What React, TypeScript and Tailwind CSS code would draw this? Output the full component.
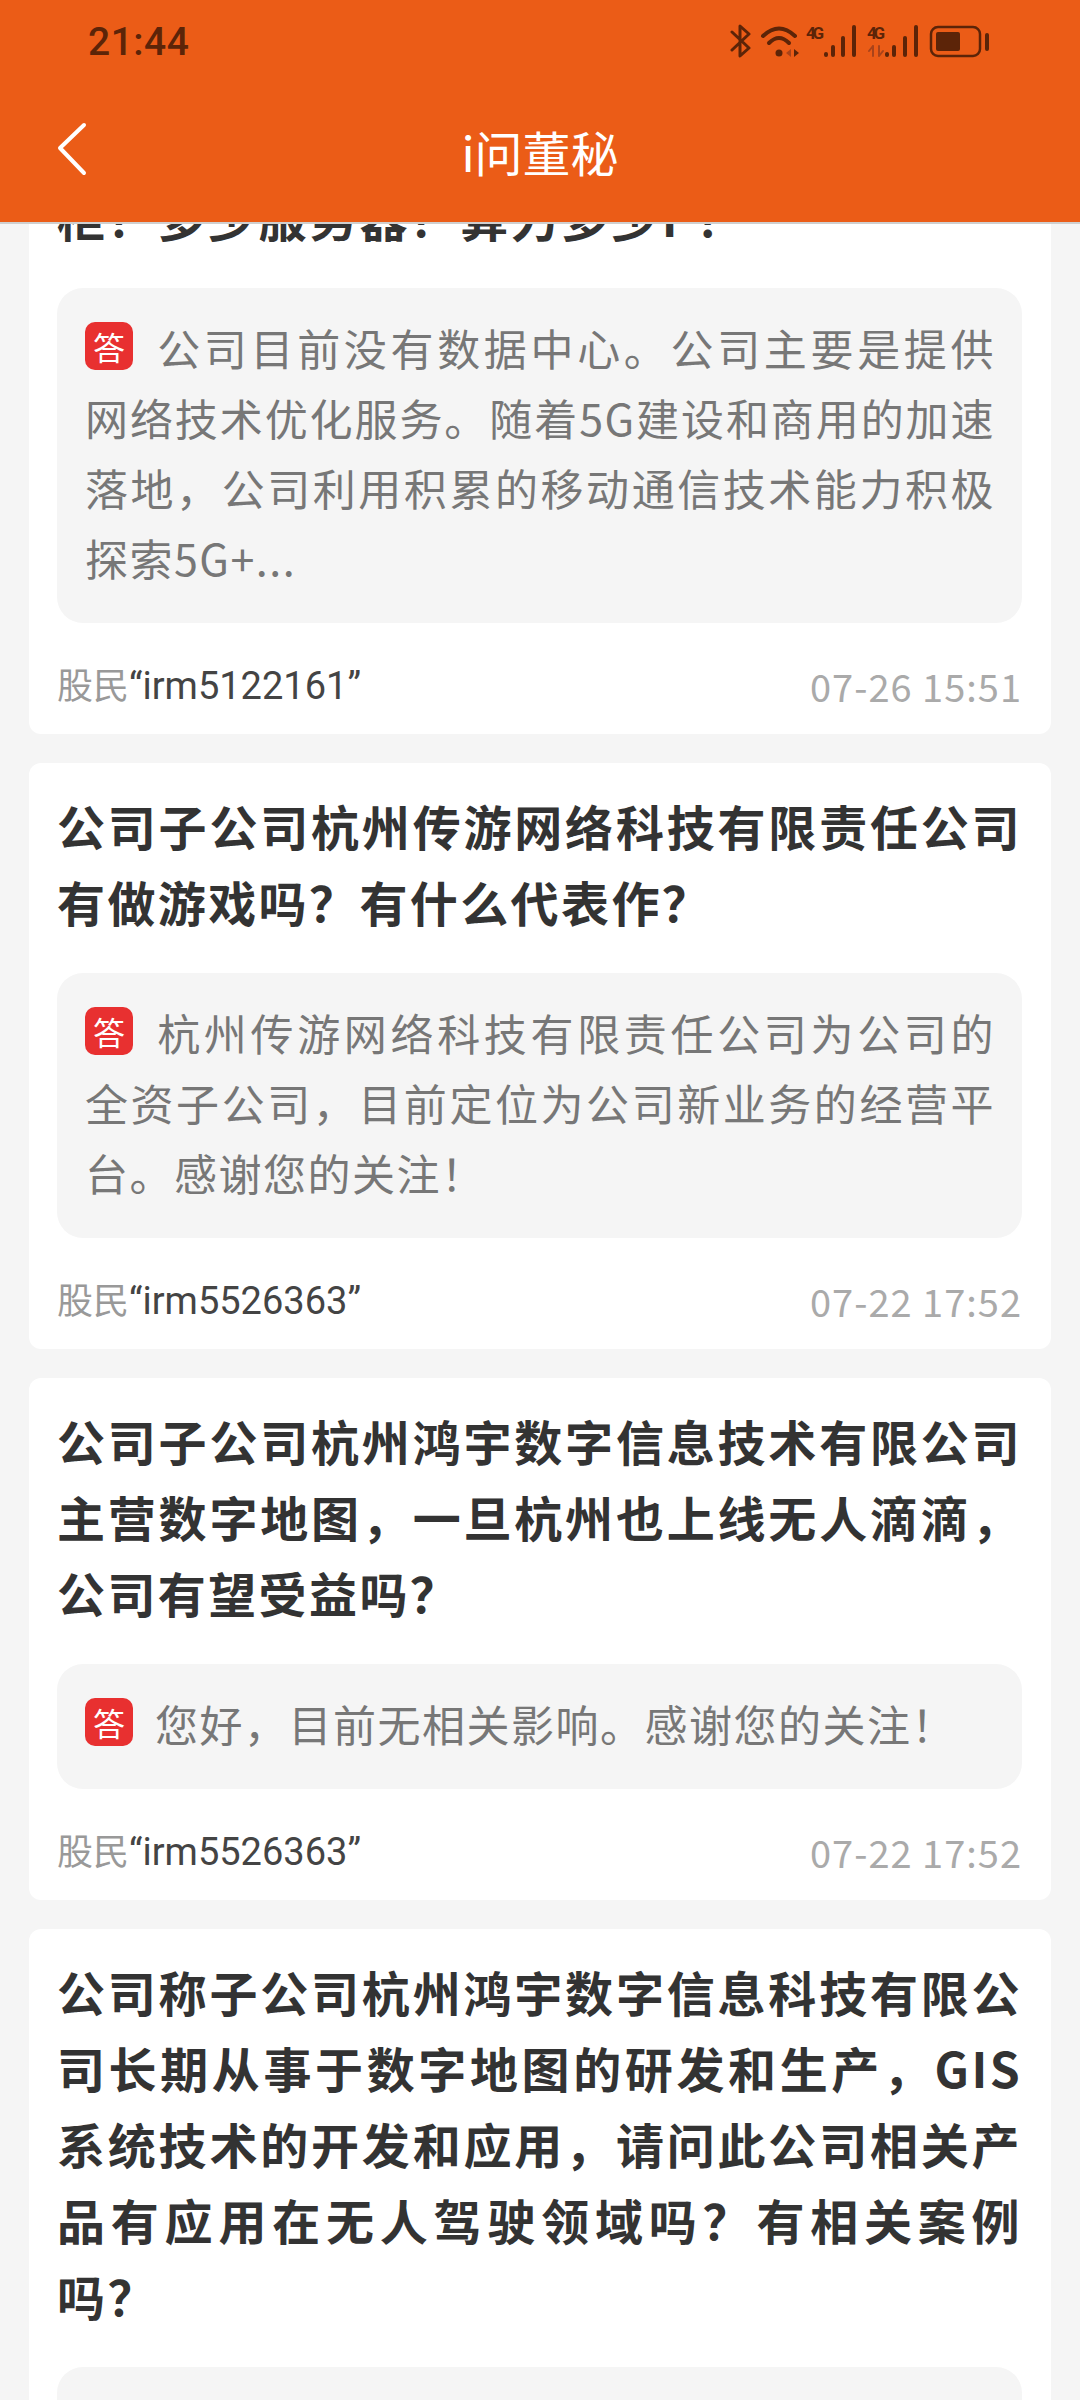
type Question = {
  title: string;
  answer?: string;
  user?: string;
  time?: string;
};

const questions: Question[] = [
  {
    title: '请问公司目前共拥有多少数据中心？多少机柜？多少服务器？算力多少P？',
    answer:
      '公司目前没有数据中心。公司主要是提供网络技术优化服务。随着5G建设和商用的加速落地，公司利用积累的移动通信技术能力积极探索5G+...',
    user: 'irm5122161',
    time: '07-26 15:51',
  },
  {
    title: '公司子公司杭州传游网络科技有限责任公司有做游戏吗？有什么代表作？',
    answer: '杭州传游网络科技有限责任公司为公司的全资子公司，目前定位为公司新业务的经营平台。感谢您的关注！',
    user: 'irm5526363',
    time: '07-22 17:52',
  },
  {
    title: '公司子公司杭州鸿宇数字信息技术有限公司主营数字地图，一旦杭州也上线无人滴滴，公司有望受益吗？',
    answer: '您好，目前无相关影响。感谢您的关注！',
    user: 'irm5526363',
    time: '07-22 17:52',
  },
  {
    title:
      '公司称子公司杭州鸿宇数字信息科技有限公司长期从事于数字地图的研发和生产，GIS系统技术的开发和应用，请问此公司相关产品有应用在无人驾驶领域吗？有相关案例吗？',
    answer: ' ',
  },
];

function StatusIcons() {
  return (
    <svg width="260" height="36" viewBox="730 22 260 36" fill="none" stroke="#5c2408" strokeLinecap="round" strokeLinejoin="round">
      {/* bluetooth */}
      <path d="M732 30 L749 46 L740 54 L740 24 L749 32 L732 48" strokeWidth="3" />
      {/* wifi */}
      <path d="M763 34 Q779 19 795 34" strokeWidth="4" />
      <path d="M769 41 Q779 31 789 41" strokeWidth="4" />
      <circle cx="779" cy="51" r="3.5" fill="#5c2408" stroke="none" />
      <path d="M791 47 L786 51 L791 55 Z" fill="#a8431a" stroke="none" />
      <path d="M794 47 L799 51 L794 55 Z" fill="#5c2408" stroke="none" />
      {/* first signal */}
      <text x="806" y="37" fontSize="17" fontWeight="700" fontFamily="Roboto, sans-serif" textLength="18" fill="#5c2408" stroke="none">4G</text>
      <g strokeWidth="4">
        <path d="M826 52 L826 53" />
        <path d="M833 45 L833 53" />
        <path d="M843 36 L843 53" />
        <path d="M854 25 L854 53" />
      </g>
      {/* second signal */}
      <text x="867" y="37" fontSize="17" fontWeight="700" fontFamily="Roboto, sans-serif" textLength="18" fill="#5c2408" stroke="none">4G</text>
      <path d="M873 44 L869 49 M873 44 L873 54" strokeWidth="2" stroke="#a8431a" />
      <path d="M879 44 L879 54 M879 54 L883 49" strokeWidth="2" stroke="#a8431a" />
      <g strokeWidth="4">
        <path d="M887 52 L887 53" />
        <path d="M894 45 L894 53" />
        <path d="M905 36 L905 53" />
        <path d="M916 25 L916 53" />
      </g>
      {/* battery */}
      <rect x="931" y="25" width="49" height="29" rx="7" strokeWidth="2.5" />
      <rect x="936" y="30" width="24" height="19" rx="2" fill="#5c2408" stroke="none" />
      <path d="M987 33 L987 47" strokeWidth="4" />
    </svg>
  );
}

function AnswerBadge() {
  return (
    <span className="inline-flex w-[48px] h-[48px] mr-[22px] align-[6px] items-center justify-center rounded-[10px] bg-[#e83030] text-white text-[32px] leading-none tracking-normal">
      答
    </span>
  );
}

function QuestionCard({ item }: { item: Question }) {
  return (
    <div className="bg-white rounded-[12px] pl-[28px] pr-[29px] pt-[24px] pb-[19px]">
      <h2 className="text-[48px] leading-[76px] font-bold text-[#333333] tracking-[2.4px] text-justify m-0">{item.title}</h2>
      <div className="mt-[34px] bg-[#f5f5f5] rounded-[26px] pl-[28px] pr-[27px] pt-[24px] pb-[31px] text-[43px] leading-[70px] tracking-[1.5px] text-justify text-[#777777]">
        <AnswerBadge />
        {item.answer}
      </div>
      {item.user && (
        <div className="mt-[32px] flex items-center justify-between h-[60px] text-[36px]">
          <span className="text-[#999999]">
            股民<span className="font-['Roboto',sans-serif] text-[38px] text-[#444444]">“{item.user}”</span>
          </span>
          <span className="text-[38px] text-[#aaaaaa] tracking-[1px]">{item.time}</span>
        </div>
      )}
    </div>
  );
}

export default function App() {
  return (
    <div className="w-[1080px] h-[2400px] overflow-hidden bg-[#f5f5f5] font-['Noto_Sans_CJK_SC','Noto_Sans',sans-serif]">
      <header className="relative z-10 h-[224px] bg-[#eb5c17] border-b-2 border-[#cfcfcf]">
        <div className="flex items-center justify-between h-[84px] pl-[88px] pr-[90px]">
          <span className="font-['Roboto',sans-serif] font-medium text-[39px] tracking-[0.5px] text-[#5c2408]">21:44</span>
          <StatusIcons />
        </div>
        <div className="relative flex items-center justify-center h-[66px] mt-[34px]">
          <svg className="absolute left-[54px] top-[4px]" width="36" height="54" viewBox="0 0 36 54" fill="none" stroke="white" strokeWidth="4" strokeLinecap="round" strokeLinejoin="round">
            <path d="M30 3 L6 26 L30 51" />
          </svg>
          <span className="text-[48px] leading-none text-white">i问董秘</span>
        </div>
      </header>
      <main className="flex flex-col gap-[29px] px-[29px] -mt-[146px]">
        {questions.map((q, i) => (
          <QuestionCard key={i} item={q} />
        ))}
      </main>
    </div>
  );
}
